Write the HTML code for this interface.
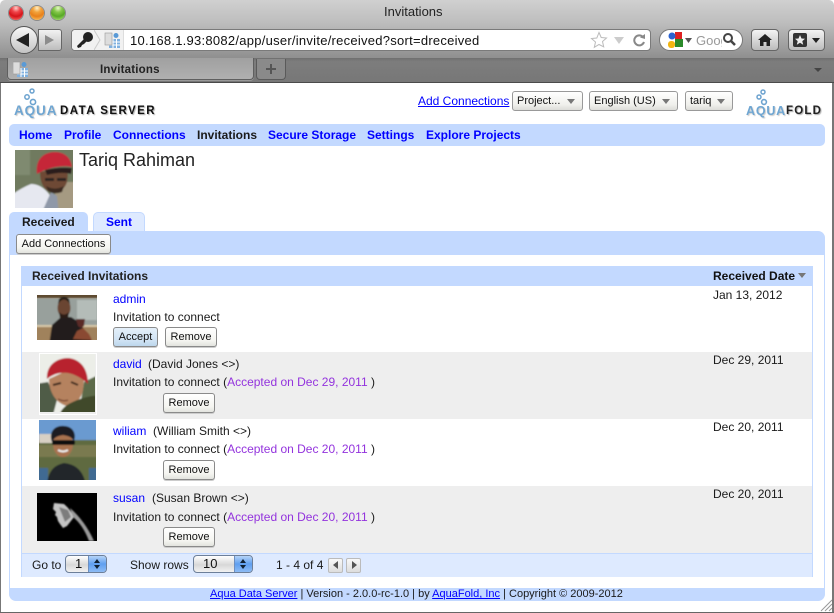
<!DOCTYPE html>
<html><head><meta charset="utf-8"><title>Invitations</title>
<style>
html,body{margin:0;padding:0;background:#fff}
#r{position:relative;width:834px;height:613px;overflow:hidden;background:#fff;font-family:"Liberation Sans",sans-serif;font-size:12px;color:#1a1a1a}
#r div,#r a,#r span.t,#r svg{position:absolute}
.t{position:absolute;white-space:nowrap;line-height:14px}
a{color:#00f}
.l{color:#00f;text-decoration:none}
.b{font-weight:bold}
.p{color:#9333dd}
.btn{box-sizing:border-box;height:20px;border:1px solid #8a8a8a;border-radius:3px;background:linear-gradient(#fff,#f5f5f1 70%,#e2e3de);text-align:center;line-height:18px;font-size:11px;color:#111;box-shadow:0 1px 0 #ccc;white-space:nowrap}
.sel{box-sizing:border-box;height:20px;top:91px;border:1px solid #999;border-radius:3px;background:linear-gradient(#fff,#f0f0ec 70%,#dcdcd8);line-height:18px;font-size:11px;padding-left:4px;color:#111;white-space:nowrap}
.sel i{position:absolute;right:7px;top:7px;width:0;height:0;border-left:4px solid transparent;border-right:4px solid transparent;border-top:5px solid #777}
.step{box-sizing:border-box;height:18px;top:555px;border:1px solid #6d7f99;border-radius:4px;background:linear-gradient(#fff,#d8d8d8 55%,#f2f2f2);font-size:13px;line-height:16px;color:#111;overflow:hidden}
.step b{position:absolute;right:0;top:0;bottom:0;width:17px;background:linear-gradient(#b5d3f7,#5f9ff0 50%,#8dbcf5);border-left:1px solid #6d8fc0}
.step b:before{content:"";position:absolute;left:5px;top:3px;border-left:3px solid transparent;border-right:3px solid transparent;border-bottom:4px solid #123}
.step b:after{content:"";position:absolute;left:5px;top:9px;border-left:3px solid transparent;border-right:3px solid transparent;border-top:4px solid #123}
.pg{box-sizing:border-box;width:15px;height:15px;top:558px;border:1px solid #bbb;border-radius:2px;background:linear-gradient(#f8f8f8,#ddd)}
</style></head><body>
<div id="r">
<svg width="0" height="0" style="left:0;top:0"><defs><filter id="bl" x="-20%" y="-20%" width="140%" height="140%"><feGaussianBlur stdDeviation="0.8"/></filter></defs></svg>
<!-- browser chrome -->
<div style="left:0;top:0;width:834px;height:58px;background:linear-gradient(#d0d0d0,#bdbdbd 40%,#8f8f8f);border-radius:5px 5px 0 0"></div>
<div style="left:0;top:58px;width:834px;height:25px;background:linear-gradient(#6f6f6f,#7d7d7d 15%,#777);border-bottom:1px solid #4a4a4a;box-sizing:border-box"></div>
<div style="left:0;top:83px;width:1px;height:530px;background:#777"></div>
<div style="left:832px;top:83px;width:2px;height:530px;background:#777"></div>
<div style="left:0;top:612px;width:834px;height:1px;background:#666"></div>
<span class="t" style="left:384px;top:5px;font-size:13px;color:#222">Invitations</span>
<div style="left:9px;top:6px;width:14px;height:14px;border-radius:50%;background:radial-gradient(circle at 50% 15%,#fbd0cc 0,#f0454a 30%,#d5141a 60%,#ff7a70);box-shadow:0 0 0 1px #8a8a8a"></div>
<div style="left:30px;top:6px;width:14px;height:14px;border-radius:50%;background:radial-gradient(circle at 50% 15%,#fff0c8 0,#f2a33c 30%,#e8801a 60%,#ffd070);box-shadow:0 0 0 1px #8a8a8a"></div>
<div style="left:51px;top:6px;width:14px;height:14px;border-radius:50%;background:radial-gradient(circle at 50% 15%,#e8f8c8 0,#85c84a 30%,#58a826 60%,#b8ee80);box-shadow:0 0 0 1px #8a8a8a"></div>
<!-- back/forward -->
<div style="left:38px;top:29px;width:24px;height:22px;box-sizing:border-box;border:1px solid #666;border-radius:0 3px 3px 0;background:linear-gradient(#f2f2f2,#bdbdbd)"></div>
<div style="left:10px;top:26px;width:28px;height:28px;box-sizing:border-box;border:1px solid #555;border-radius:50%;background:linear-gradient(#f8f8f8,#c4c4c4)"></div>
<svg style="left:15px;top:32px" width="16" height="16"><path d="M14 1v14L1 8z" fill="#222"/></svg>
<svg style="left:44px;top:34px" width="12" height="12"><path d="M1 1v10l9-5z" fill="#8c8c8c"/></svg>
<!-- address bar -->
<div style="left:71px;top:29px;width:580px;height:22px;box-sizing:border-box;border:1px solid #7a7a7a;border-radius:4px;background:#fff"></div>
<div style="left:72px;top:30px;width:52px;height:20px;background:#f1f1f1;border-radius:3px 0 0 3px;border-right:1px solid #ddd;box-sizing:border-box"></div>
<svg style="left:76px;top:31px" width="18" height="18"><circle cx="12" cy="6" r="5" fill="#222"/><path d="M9 7L1 15l1 2 3-1 1-2 2-1 4-4z" fill="#222"/></svg>
<svg style="left:94px;top:30px" width="8" height="20"><path d="M0 0l6 10-6 10" fill="none" stroke="#ccc"/></svg>
<svg style="left:104px;top:32px" width="16" height="16"><rect x="5" y="7" width="11" height="9" fill="#7fb0df"/><path d="M5 10h11M5 13h11M9 7v9M12.500 7v9" stroke="#fff"/><rect x="1" y="1" width="7" height="12" fill="#ddd" stroke="#999" stroke-width=".6"/><circle cx="12" cy="3.500" r="2.500" fill="#5a9ad6"/></svg>
<span class="t" style="left:130px;top:34px;font-size:13px;color:#111;letter-spacing:.02em">10.168.1.93:8082/app/user/invite/received?sort=dreceived</span>
<svg style="left:590px;top:31px" width="18" height="18"><path d="M9 1.500l2.200 5 5.300.5-4 3.500 1.200 5.300L9 13.500 4.300 16.300l1.200-5.300-4-3.500 5.300-.5z" fill="#fff" stroke="#bbb"/></svg>
<svg style="left:613px;top:36px" width="12" height="9"><path d="M1 1h10L6 8z" fill="#ccc"/></svg>
<svg style="left:632px;top:33px" width="14" height="14"><path d="M11 4a5 5 0 1 0 1 5" fill="none" stroke="#888" stroke-width="2"/><path d="M8 4.500L13 1v5z" fill="#888"/></svg>
<!-- search -->
<div style="left:659px;top:29px;width:84px;height:22px;box-sizing:border-box;border:1px solid #777;border-radius:11px;background:#fff"></div>
<svg style="left:667px;top:31px" width="18" height="18"><rect x="8" y="1" width="7" height="7" fill="#d22"/><rect x="8" y="8" width="8" height="8" fill="#2a8a2a"/><rect x="1" y="10" width="7" height="7" rx="3" fill="#f2b511"/><circle cx="5" cy="5" r="3.500" fill="#2a62d0"/></svg>
<svg style="left:685px;top:38px" width="8" height="6"><path d="M0 0h7L3.500 5z" fill="#555"/></svg>
<span class="t" style="left:696px;top:34px;font-size:13px;color:#999;width:26px;overflow:hidden">Goog</span>
<svg style="left:722px;top:32px" width="15" height="15"><circle cx="6" cy="6" r="4" fill="none" stroke="#444" stroke-width="2"/><path d="M9 9l4 4" stroke="#444" stroke-width="2.500"/></svg>
<!-- home/bookmark -->
<div style="left:751px;top:29px;width:28px;height:22px;box-sizing:border-box;border:1px solid #666;border-radius:4px;background:linear-gradient(#f4f4f4,#bcbcbc)"></div>
<svg style="left:757px;top:33px" width="16" height="14"><path d="M8 1L1 7h2v6h3.500V9h3v4H13V7h2z" fill="#222"/></svg>
<div style="left:788px;top:29px;width:37px;height:22px;box-sizing:border-box;border:1px solid #666;border-radius:4px;background:linear-gradient(#f4f4f4,#bcbcbc)"></div>
<div style="left:793px;top:33px;width:14px;height:14px;background:#333;border-radius:2px"></div>
<svg style="left:794px;top:34px" width="12" height="12"><path d="M6 1l1.500 3.500 3.500.3-2.700 2.300.9 3.600L6 8.800 2.800 10.700l.9-3.600L1 4.800l3.500-.3z" fill="#eee"/></svg>
<svg style="left:812px;top:38px" width="9" height="6"><path d="M0 0h8L4 5z" fill="#222"/></svg>
<!-- tabs -->
<div style="left:7px;top:58px;width:247px;height:22px;box-sizing:border-box;border:1px solid #5f5f5f;border-top:0;border-radius:0 0 4px 4px;background:linear-gradient(#a0a0a0,#b0b0b0);box-shadow:0 1px 0 #999"></div>
<svg style="left:13px;top:61px" width="15" height="16"><rect x="4" y="7" width="11" height="9" fill="#7fb0df"/><path d="M4 10h11M4 13h11M8 7v9M11.500 7v9" stroke="#fff"/><rect x="0" y="1" width="7" height="12" fill="#ddd" stroke="#999" stroke-width=".6"/><circle cx="11" cy="3.500" r="2.500" fill="#5a9ad6"/></svg>
<span class="t b" style="left:100px;top:63px;font-size:11.500px;color:#222;font-weight:bold;letter-spacing:.2px">Invitations</span>
<div style="left:256px;top:59px;width:30px;height:21px;box-sizing:border-box;border:1px solid #5a5a5a;border-top:0;border-radius:0 0 4px 4px;background:#8a8a8a"></div>
<svg style="left:265px;top:63px" width="12" height="12"><path d="M6 1v10M1 6h10" stroke="#555" stroke-width="2"/></svg>
<svg style="left:814px;top:68px" width="9" height="5"><path d="M0 0h8L4 4z" fill="#444"/></svg>

<!-- header -->
<svg style="left:22px;top:87px" width="16" height="20"><circle cx="10" cy="4" r="2" fill="none" stroke="#6da3cf" stroke-width="1.500"/><circle cx="5" cy="10" r="2.200" fill="none" stroke="#6da3cf" stroke-width="1.500"/><circle cx="11" cy="15" r="2.600" fill="none" stroke="#6da3cf" stroke-width="1.600"/></svg>
<span class="t" style="left:14px;top:104px;font-size:13.500px;font-weight:bold;color:#6fa6d2;letter-spacing:.9px;text-shadow:1px 1px 1px #ccc">AQUA</span>
<span class="t" style="left:60px;top:104px;font-size:11.500px;font-weight:bold;color:#111;letter-spacing:1.450px;text-shadow:1px 1px 1px #aaa">DATA SERVER</span>
<a class="t" href="#" style="left:418px;top:94px;font-size:12px">Add Connections</a>
<div class="sel" style="left:512px;width:71px">Project...<i></i></div>
<div class="sel" style="left:589px;width:89px">English (US)<i></i></div>
<div class="sel" style="left:685px;width:48px">tariq<i></i></div>
<svg style="left:752px;top:89px" width="16" height="20"><circle cx="11" cy="3" r="2" fill="none" stroke="#6da3cf" stroke-width="1.500"/><circle cx="7" cy="8" r="2" fill="none" stroke="#6da3cf" stroke-width="1.500"/><circle cx="12" cy="13" r="2.400" fill="none" stroke="#6da3cf" stroke-width="1.600"/></svg>
<span class="t" style="left:746px;top:104px;font-size:12.500px;font-weight:bold;color:#6fa6d2;letter-spacing:.8px;text-shadow:1px 1px 1px #ccc">AQUA</span>
<span class="t" style="left:786px;top:104px;font-size:11.500px;font-weight:bold;color:#222;letter-spacing:1.200px;text-shadow:1px 1px 1px #aaa">FOLD</span>

<!-- nav -->
<div style="left:9px;top:124px;width:816px;height:22px;background:#c3d9ff;border-radius:5px"></div>
<span class="t b l" style="left:19px;top:128px">Home</span>
<span class="t b l" style="left:64px;top:128px">Profile</span>
<span class="t b l" style="left:113px;top:128px">Connections</span>
<span class="t b" style="left:197px;top:128px">Invitations</span>
<span class="t b l" style="left:268px;top:128px">Secure Storage</span>
<span class="t b l" style="left:367px;top:128px">Settings</span>
<span class="t b l" style="left:426px;top:128px">Explore Projects</span>

<!-- profile -->
<svg style="left:15px;top:150px" width="58" height="58" viewBox="0 0 58 58"><g filter="url(#bl)"><rect x="-5" y="-5" width="70" height="70" fill="#6f7a5e"/><rect x="-5" y="-5" width="20" height="30" fill="#7f8a70"/><rect x="40" y="32" width="25" height="30" fill="#a59a82"/><path d="M-5 65V46Q6 38 16 34q10 0 18 10l10 21z" fill="#e6e8f0"/><path d="M28 60l8-18 6 4 2 19z" fill="#8f98a8"/><path d="M25 22c0 10 3 17 10 20 8 2 15-3 17-10 1-5 1-10 0-14z" fill="#6e4a36"/><path d="M22 24C20 10 28 2 40 2c10 0 16 6 17 15-9-2-24 0-35 7z" fill="#c52638"/><path d="M30 20c8-2 18-3 27-2l-1 6c-7-2-16-1-24 1z" fill="#2a1f1a"/><path d="M30 28h9v3h-9zM42 28h9v3h-9z" fill="#2a2420"/><path d="M31 36q9 5 18 0l-2 6q-8 3-14-1z" fill="#3a2a20"/></g></svg>
<span class="t" style="left:79px;top:150px;font-size:18px;line-height:20px;color:#222">Tariq Rahiman</span>

<!-- tabs in page -->
<div style="left:9px;top:212px;width:79px;height:20px;background:#c3d9ff;border-radius:5px 5px 0 0"></div>
<span class="t b" style="left:22px;top:215px">Received</span>
<div style="left:93px;top:212px;width:52px;height:19px;box-sizing:border-box;background:#deeaff;border:1px solid #c3d9ff;border-bottom:0;border-radius:5px 5px 0 0"></div>
<span class="t b l" style="left:106px;top:215px">Sent</span>

<!-- panel -->
<div style="left:9px;top:231px;width:816px;height:370px;box-sizing:border-box;border:1px solid #c3d9ff;border-top:0;border-radius:0 8px 8px 8px;background:#fff"></div>
<div style="left:9px;top:231px;width:816px;height:24px;background:#c3d9ff;border-radius:0 7px 0 0"></div>
<div class="btn" style="left:16px;top:234px;width:95px">Add Connections</div>

<!-- table -->
<div style="left:21px;top:266px;width:792px;height:311px;box-sizing:border-box;border:1px solid #c3d9ff;background:#fff"></div>
<div style="left:21px;top:266px;width:792px;height:20px;background:#c3d9ff"></div>
<span class="t b" style="left:32px;top:269px;color:#222">Received Invitations</span>
<span class="t b" style="left:713px;top:269px;color:#111">Received Date</span>
<svg style="left:798px;top:273px" width="9" height="6"><path d="M0 0h8L4 5z" fill="#777"/></svg>

<div style="left:22px;top:352px;width:790px;height:67px;background:#eee"></div>
<div style="left:22px;top:486px;width:790px;height:67px;background:#eee"></div>
<div style="left:22px;top:553px;width:790px;height:23px;background:#deeaff;border-top:1px solid #c3d9ff"></div>

<!-- row 1 -->
<svg style="left:37px;top:295px" width="60" height="45" viewBox="0 0 60 45"><rect width="60" height="45" fill="#a0825c"/><rect width="60" height="3" fill="#5e4a30"/><g filter="url(#bl)"><rect x="-5" y="3" width="70" height="27" fill="#98a09c"/><rect x="-5" y="30" width="70" height="2" fill="#d8c8a8"/><rect x="-5" y="32" width="70" height="20" fill="#a0825c"/><rect x="40" y="5" width="20" height="20" fill="#b4bcb8"/><path d="M12 50l3-20 9-8h10l8 5 12 18 3 5z" fill="#201c1a"/><ellipse cx="27" cy="13" rx="6.500" ry="9" fill="#6b4530"/><path d="M21 9q6-9 12 0l-1-5q-5-4-10 0z" fill="#211a14"/><path d="M22 17q5 5 10 0l-1 6h-8z" fill="#2a1c14"/><path d="M39 24h9l-1 7-3 2-3-2z" fill="#5a2a28"/><path d="M36 44l4-8 6-3 6 6 3 6z" fill="#8a4a30"/></g></svg>
<span class="t l" style="left:113px;top:292px">admin</span>
<span class="t" style="left:113px;top:310px">Invitation to connect</span>
<div class="btn" style="left:113px;top:327px;width:45px;background:linear-gradient(#e4f0fa,#cfe2f3 70%,#bcd6ec)">Accept</div>
<div class="btn" style="left:165px;top:327px;width:52px">Remove</div>
<span class="t" style="left:713px;top:288px">Jan 13, 2012</span>

<!-- row 2 -->
<div style="left:39px;top:353px;width:56px;height:60px;border:1px solid #fff"></div>
<svg style="left:40px;top:354px" width="55" height="58" viewBox="0 0 55 58"><g filter="url(#bl)"><rect x="-5" y="-5" width="70" height="70" fill="#eceee8"/><path d="M-5 30l13-2 9 18-4 15H-5z" fill="#4f5c46"/><path d="M44 28l16-8v45H38z" fill="#5c6a48"/><path d="M9 25c0 12 6 24 18 27 8 0 14-7 16-16l1-11-18-8z" fill="#b5825e"/><path d="M7 25C6 12 16 4 28 4c12 1 20 10 20 26-6-6-14-10-20-11-8-1-15 1-21 6z" fill="#b8222e"/><path d="M20 60c2-8 12-12 20-15 6-2 14-4 20-3v20z" fill="#414a2c"/><path d="M13 31l8-2M31 28l7 3" stroke="#3a261c" stroke-width="2"/><path d="M18 45q6 3 10 1" stroke="#7a4a34" stroke-width="1.500" fill="none"/></g></svg>
<span class="t l" style="left:113px;top:357px">david</span>
<span class="t" style="left:148px;top:357px">(David Jones &lt;&gt;)</span>
<span class="t" style="left:113px;top:375px">Invitation to connect (<span class="p">Accepted on Dec 29, 2011</span> )</span>
<div class="btn" style="left:163px;top:393px;width:52px">Remove</div>
<span class="t" style="left:713px;top:353px">Dec 29, 2011</span>

<!-- row 3 -->
<svg style="left:39px;top:420px" width="57" height="60" viewBox="0 0 57 60"><g filter="url(#bl)"><rect x="-5" y="-5" width="70" height="30" fill="#6a9ad0"/><rect x="-5" y="20" width="70" height="45" fill="#5e6b40"/><rect x="-5" y="25" width="70" height="12" fill="#7a7a50"/><rect x="0" y="14" width="14" height="9" fill="#d8d0c4"/><rect x="-5" y="48" width="14" height="17" fill="#3f6b92"/><rect x="50" y="48" width="14" height="17" fill="#3f6b92"/><path d="M8 65c1-15 8-20 17-22 10 1 19 6 22 22z" fill="#20262c"/><ellipse cx="24" cy="24" rx="10" ry="13" fill="#a87250"/><path d="M13 22c-4-11 4-17 12-16 8 0 13 7 10 15-3-5-7-5-11-6-4 1-8 1-11 7z" fill="#1a1a20"/><rect x="13" y="20" width="23" height="5" rx="2" fill="#0c0c10"/><path d="M19 30q5 3 10 0" stroke="#eee" stroke-width="2" fill="none"/></g></svg>
<span class="t l" style="left:113px;top:424px">wiliam</span>
<span class="t" style="left:153px;top:424px">(William Smith &lt;&gt;)</span>
<span class="t" style="left:113px;top:442px">Invitation to connect (<span class="p">Accepted on Dec 20, 2011</span> )</span>
<div class="btn" style="left:163px;top:460px;width:52px">Remove</div>
<span class="t" style="left:713px;top:420px">Dec 20, 2011</span>

<!-- row 4 -->
<svg style="left:37px;top:493px" width="60" height="48" viewBox="0 0 60 48"><rect width="60" height="48" fill="#000"/><g filter="url(#bl)"><path d="M17 10L27 11Q33 16 37 24L30 33 26 35 23 31 21 28 20 24 18 22 19 19 16 16z" fill="#c4c4c4"/><path d="M33 15Q48 28 57 48L52 48Q46 32 36 24z" fill="#9a9a9a"/><path d="M22 14l9 3 3 7-6 5z" fill="#7c7c7c"/></g></svg>
<span class="t l" style="left:113px;top:491px">susan</span>
<span class="t" style="left:152px;top:491px">(Susan Brown &lt;&gt;)</span>
<span class="t" style="left:113px;top:510px">Invitation to connect (<span class="p">Accepted on Dec 20, 2011</span> )</span>
<div class="btn" style="left:163px;top:527px;width:52px">Remove</div>
<span class="t" style="left:713px;top:487px">Dec 20, 2011</span>

<!-- pager -->
<span class="t" style="left:32px;top:558px">Go to</span>
<div class="step" style="left:65px;width:42px;padding-left:9px">1<b></b></div>
<span class="t" style="left:130px;top:558px">Show rows</span>
<div class="step" style="left:193px;width:60px;padding-left:9px">10<b></b></div>
<span class="t" style="left:276px;top:558px">1 - 4 of 4</span>
<div class="pg" style="left:328px"></div>
<svg style="left:333px;top:561px" width="6" height="8"><path d="M5 0v8L0 4z" fill="#555"/></svg>
<div class="pg" style="left:346px"></div>
<svg style="left:352px;top:561px" width="6" height="8"><path d="M0 0v8l5-4z" fill="#555"/></svg>

<!-- footer -->
<div style="left:9px;top:588px;width:816px;height:13px;background:#c3d9ff;border-radius:0 0 7px 7px"></div>
<span class="t" style="left:210px;top:587px;font-size:11px"><a href="#" style="position:static">Aqua Data Server</a> | Version - 2.0.0-rc-1.0 | by <a href="#" style="position:static">AquaFold, Inc</a> | Copyright © 2009-2012</span>
<svg style="left:820px;top:599px" width="12" height="13"><path d="M1 12L12 1M5 12l7-7M9 12l3-3" stroke="#999"/></svg>
</div>
</body></html>
